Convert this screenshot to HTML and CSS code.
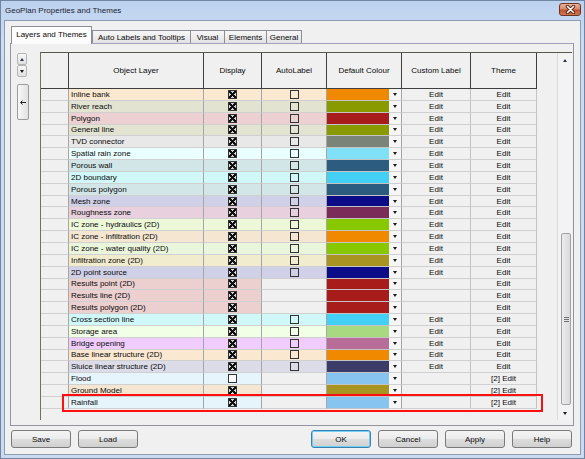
FILE: index.html
```html
<!DOCTYPE html>
<html lang="en">
<head>
    <meta charset="UTF-8">
    <title>GeoPlan Properties and Themes</title>
    <link rel="stylesheet" href="styles.css">
</head>
<body>
<div class="window">
    <div class="titlebar">
        <span class="title">GeoPlan Properties and Themes</span>
        <button class="close-btn">
            <svg width="13" height="9" viewBox="0 0 13 9">
                <path d="M3.5 1.5 L9.5 7.5 M9.5 1.5 L3.5 7.5" stroke="#5b2616" stroke-width="3.4" stroke-linecap="round"/>
                <path d="M3.5 1.5 L9.5 7.5 M9.5 1.5 L3.5 7.5" stroke="#ffffff" stroke-width="1.6" stroke-linecap="round"/>
            </svg>
        </button>
    </div>

    <div class="client">
        <div class="tabs">
            <div class="tab active t1">Layers and Themes</div>
            <div class="tab t2">Auto Labels and Tooltips</div>
            <div class="tab t3">Visual</div>
            <div class="tab t4">Elements</div>
            <div class="tab t5">General</div>
        </div>

        <div class="panel">
            <div class="tools">
                <div class="spin">
                    <button class="spin-btn"><i class="tri up"></i></button>
                    <button class="spin-btn"><i class="tri down"></i></button>
                </div>
                <button class="move-btn">
                    <svg width="6" height="5" viewBox="0 0 6 5">
                        <path d="M0.5 2.5 H6 M2.5 0.5 L0.5 2.5 L2.5 4.5" stroke="#222" stroke-width="1" fill="none"/>
                    </svg>
                </button>
            </div>

            <div class="grid">
                <div class="table">
                    <div class="head">
                        <div class="hc"></div>
                        <div class="hc">Object Layer</div>
                        <div class="hc">Display</div>
                        <div class="hc">AutoLabel</div>
                        <div class="hc">Default Colour</div>
                        <div class="hc">Custom Label</div>
                        <div class="hc">Theme</div>
                    </div>

                    <div class="row" style="--c:#fbe8d0"><div class="rh"></div><div class="name">Inline bank</div><div class="chk"><span class="cb on"></span></div><div class="chk"><span class="cb"></span></div><div class="sw" style="background:#f08800"></div><div class="dd"><i class="tri down"></i></div><div class="ed">Edit</div><div class="ed">Edit</div></div>
                    <div class="row" style="--c:#e2e3d0"><div class="rh"></div><div class="name">River reach</div><div class="chk"><span class="cb on"></span></div><div class="chk"><span class="cb"></span></div><div class="sw" style="background:#889a00"></div><div class="dd"><i class="tri down"></i></div><div class="ed">Edit</div><div class="ed">Edit</div></div>
                    <div class="row" style="--c:#ecd0d2"><div class="rh"></div><div class="name">Polygon</div><div class="chk"><span class="cb on"></span></div><div class="chk"><span class="cb"></span></div><div class="sw" style="background:#a81c1c"></div><div class="dd"><i class="tri down"></i></div><div class="ed">Edit</div><div class="ed">Edit</div></div>
                    <div class="row" style="--c:#e2e3d0"><div class="rh"></div><div class="name">General line</div><div class="chk"><span class="cb on"></span></div><div class="chk"><span class="cb"></span></div><div class="sw" style="background:#889a00"></div><div class="dd"><i class="tri down"></i></div><div class="ed">Edit</div><div class="ed">Edit</div></div>
                    <div class="row" style="--c:#e8e8e8"><div class="rh"></div><div class="name">TVD connector</div><div class="chk"><span class="cb on"></span></div><div class="chk"><span class="cb"></span></div><div class="sw" style="background:#7a8478"></div><div class="dd"><i class="tri down"></i></div><div class="ed">Edit</div><div class="ed">Edit</div></div>
                    <div class="row" style="--c:#eaffff"><div class="rh"></div><div class="name">Spatial rain zone</div><div class="chk"><span class="cb on"></span></div><div class="chk"><span class="cb"></span></div><div class="sw" style="background:#80e0f8"></div><div class="dd"><i class="tri down"></i></div><div class="ed">Edit</div><div class="ed">Edit</div></div>
                    <div class="row" style="--c:#d2e6e8"><div class="rh"></div><div class="name">Porous wall</div><div class="chk"><span class="cb on"></span></div><div class="chk"><span class="cb"></span></div><div class="sw" style="background:#2c5c80"></div><div class="dd"><i class="tri down"></i></div><div class="ed">Edit</div><div class="ed">Edit</div></div>
                    <div class="row" style="--c:#d0f8f8"><div class="rh"></div><div class="name">2D boundary</div><div class="chk"><span class="cb on"></span></div><div class="chk"><span class="cb"></span></div><div class="sw" style="background:#44d0f4"></div><div class="dd"><i class="tri down"></i></div><div class="ed">Edit</div><div class="ed">Edit</div></div>
                    <div class="row" style="--c:#d2e6e8"><div class="rh"></div><div class="name">Porous polygon</div><div class="chk"><span class="cb on"></span></div><div class="chk"><span class="cb"></span></div><div class="sw" style="background:#2c5c80"></div><div class="dd"><i class="tri down"></i></div><div class="ed">Edit</div><div class="ed">Edit</div></div>
                    <div class="row" style="--c:#d0d0e8"><div class="rh"></div><div class="name">Mesh zone</div><div class="chk"><span class="cb on"></span></div><div class="chk"><span class="cb"></span></div><div class="sw" style="background:#0c0c88"></div><div class="dd"><i class="tri down"></i></div><div class="ed">Edit</div><div class="ed">Edit</div></div>
                    <div class="row" style="--c:#e8d0de"><div class="rh"></div><div class="name">Roughness zone</div><div class="chk"><span class="cb on"></span></div><div class="chk"><span class="cb"></span></div><div class="sw" style="background:#7c2c58"></div><div class="dd"><i class="tri down"></i></div><div class="ed">Edit</div><div class="ed">Edit</div></div>
                    <div class="row" style="--c:#ecf8d8"><div class="rh"></div><div class="name">IC zone - hydraulics (2D)</div><div class="chk"><span class="cb on"></span></div><div class="chk"><span class="cb"></span></div><div class="sw" style="background:#88c800"></div><div class="dd"><i class="tri down"></i></div><div class="ed">Edit</div><div class="ed">Edit</div></div>
                    <div class="row" style="--c:#f4e6d0"><div class="rh"></div><div class="name">IC zone - infiltration (2D)</div><div class="chk"><span class="cb on"></span></div><div class="chk"><span class="cb"></span></div><div class="sw" style="background:#f08800"></div><div class="dd"><i class="tri down"></i></div><div class="ed">Edit</div><div class="ed">Edit</div></div>
                    <div class="row" style="--c:#eaf6dc"><div class="rh"></div><div class="name">IC zone - water quality (2D)</div><div class="chk"><span class="cb on"></span></div><div class="chk"><span class="cb"></span></div><div class="sw" style="background:#88c800"></div><div class="dd"><i class="tri down"></i></div><div class="ed">Edit</div><div class="ed">Edit</div></div>
                    <div class="row" style="--c:#f2ecce"><div class="rh"></div><div class="name">Infiltration zone (2D)</div><div class="chk"><span class="cb on"></span></div><div class="chk"><span class="cb"></span></div><div class="sw" style="background:#a89420"></div><div class="dd"><i class="tri down"></i></div><div class="ed">Edit</div><div class="ed">Edit</div></div>
                    <div class="row" style="--c:#d0d0e8"><div class="rh"></div><div class="name">2D point source</div><div class="chk"><span class="cb on"></span></div><div class="chk"><span class="cb"></span></div><div class="sw" style="background:#0c0c88"></div><div class="dd"><i class="tri down"></i></div><div class="ed">Edit</div><div class="ed">Edit</div></div>
                    <div class="row" style="--c:#ecd0d0"><div class="rh"></div><div class="name">Results point (2D)</div><div class="chk"><span class="cb on"></span></div><div class="chk off"></div><div class="sw" style="background:#a81c1c"></div><div class="dd"><i class="tri down"></i></div><div class="ed"></div><div class="ed">Edit</div></div>
                    <div class="row" style="--c:#ecd0d0"><div class="rh"></div><div class="name">Results line (2D)</div><div class="chk"><span class="cb on"></span></div><div class="chk off"></div><div class="sw" style="background:#a81c1c"></div><div class="dd"><i class="tri down"></i></div><div class="ed"></div><div class="ed">Edit</div></div>
                    <div class="row" style="--c:#ecd0d0"><div class="rh"></div><div class="name">Results polygon (2D)</div><div class="chk"><span class="cb on"></span></div><div class="chk off"></div><div class="sw" style="background:#a81c1c"></div><div class="dd"><i class="tri down"></i></div><div class="ed"></div><div class="ed">Edit</div></div>
                    <div class="row" style="--c:#d0f8f8"><div class="rh"></div><div class="name">Cross section line</div><div class="chk"><span class="cb on"></span></div><div class="chk"><span class="cb"></span></div><div class="sw" style="background:#44d0f4"></div><div class="dd"><i class="tri down"></i></div><div class="ed">Edit</div><div class="ed">Edit</div></div>
                    <div class="row" style="--c:#f0ffe6"><div class="rh"></div><div class="name">Storage area</div><div class="chk"><span class="cb on"></span></div><div class="chk"><span class="cb"></span></div><div class="sw" style="background:#a8d880"></div><div class="dd"><i class="tri down"></i></div><div class="ed">Edit</div><div class="ed">Edit</div></div>
                    <div class="row" style="--c:#f0ccff"><div class="rh"></div><div class="name">Bridge opening</div><div class="chk"><span class="cb on"></span></div><div class="chk"><span class="cb"></span></div><div class="sw" style="background:#b86c98"></div><div class="dd"><i class="tri down"></i></div><div class="ed">Edit</div><div class="ed">Edit</div></div>
                    <div class="row" style="--c:#fbe8d0"><div class="rh"></div><div class="name">Base linear structure (2D)</div><div class="chk"><span class="cb on"></span></div><div class="chk"><span class="cb"></span></div><div class="sw" style="background:#f08800"></div><div class="dd"><i class="tri down"></i></div><div class="ed">Edit</div><div class="ed">Edit</div></div>
                    <div class="row" style="--c:#dcdce8"><div class="rh"></div><div class="name">Sluice linear structure (2D)</div><div class="chk"><span class="cb on"></span></div><div class="chk"><span class="cb"></span></div><div class="sw" style="background:#3c3c68"></div><div class="dd"><i class="tri down"></i></div><div class="ed">Edit</div><div class="ed">Edit</div></div>
                    <div class="row" style="--c:#e6f4fc"><div class="rh"></div><div class="name">Flood</div><div class="chk"><span class="cb white"></span></div><div class="chk off"></div><div class="sw" style="background:#88c4f0"></div><div class="dd"><i class="tri down"></i></div><div class="ed"></div><div class="ed">[2] Edit</div></div>
                    <div class="row" style="--c:#f4e6d0"><div class="rh"></div><div class="name">Ground Model</div><div class="chk"><span class="cb on"></span></div><div class="chk off"></div><div class="sw" style="background:#a89420"></div><div class="dd"><i class="tri down"></i></div><div class="ed"></div><div class="ed">[2] Edit</div></div>
                    <div class="row" style="--c:#e6f4fc"><div class="rh"></div><div class="name">Rainfall</div><div class="chk"><span class="cb on"></span></div><div class="chk off"></div><div class="sw" style="background:#88c4f0"></div><div class="dd"><i class="tri down"></i></div><div class="ed"></div><div class="ed">[2] Edit</div></div>
                </div>

                <div class="scrollbar">
                    <div class="sb-btn"><i class="tri up"></i></div>
                    <div class="sb-track">
                        <div class="sb-thumb"><span class="grip"></span></div>
                    </div>
                    <div class="sb-btn"><i class="tri down"></i></div>
                </div>

                <div class="highlight"></div>
            </div>
        </div>

        <div class="buttons">
            <div class="btn-group">
                <button class="btn">Save</button>
                <button class="btn">Load</button>
            </div>
            <div class="btn-group">
                <button class="btn default">OK</button>
                <button class="btn">Cancel</button>
                <button class="btn">Apply</button>
                <button class="btn">Help</button>
            </div>
        </div>
    </div>
</div>
</body>
</html>
```

FILE: styles.css
```css
body {
    margin: 0;
    font-family: "Liberation Sans", Arial, sans-serif;
    font-size: 8px;
    color: #0a0a0a;
    background: #c9dbf1;
}

button {
    font-family: inherit;
    font-size: 8px;
    color: #0a0a0a;
    padding: 0;
    margin: 0;
}

.window {
    width: 585px;
    height: 459px;
    box-sizing: border-box;
    border: 1px solid #6f85a3;
    padding: 0 3px 3px;
    display: flex;
    flex-direction: column;
    background: linear-gradient(#bcd2ee, #cddcf1 40px, #cbdaef);
}

/* title bar */
.titlebar {
    height: 19px;
    display: flex;
    align-items: center;
    justify-content: space-between;
    padding-left: 1px;
}

.title {
    font-size: 8px;
    color: #1c2330;
}

.close-btn {
    width: 22px;
    height: 13px;
    margin-top: -2px;
    border: 1px solid #6b3424;
    border-radius: 3px;
    background: linear-gradient(#e9b49a, #d78a67 45%, #c0502f 55%, #d27a52);
    display: flex;
    align-items: center;
    justify-content: center;
}

/* client area */
.client {
    flex: 1;
    border: 1px solid #8a9cb6;
    background: #f0f0f0;
    padding: 5px 6px 0 5px;
    display: flex;
    flex-direction: column;
}

.tabs {
    height: 17px;
    display: flex;
    align-items: flex-end;
    margin-left: 1px;
}

.tab {
    height: 13px;
    box-sizing: border-box;
    border: 1px solid #8c8e96;
    border-bottom: none;
    border-right: none;
    background: linear-gradient(#f6f6f6, #e3e3e3);
    display: flex;
    align-items: center;
    justify-content: center;
}

.tab.active {
    height: 18px;
    margin-bottom: -1px;
    position: relative;
    z-index: 1;
    background: #fcfcfc;
    border-right: 1px solid #8c8e96;
    padding-bottom: 2px;
}

.t1 { width: 81px; }
.t2 { width: 98px; }
.t3 { width: 34px; }
.t4 { width: 42px; }
.t5 { width: 36px; border-right: 1px solid #8c8e96; }

.panel {
    height: 383px;
    box-sizing: border-box;
    border: 1px solid #9294a0;
    border-top-color: #a79fbc;
    padding: 8px 1px 0 6px;
    display: flex;
}

/* left buttons */
.tools {
    width: 13px;
    margin-right: 10px;
    padding-top: 1px;
    display: flex;
    flex-direction: column;
}

.spin {
    width: 10px;
    display: flex;
    flex-direction: column;
}

.spin-btn {
    height: 12px;
    box-sizing: border-box;
    border: 1px solid #b4b4b4;
    border-radius: 2px;
    background: linear-gradient(#f8f8f8, #e0e0e0);
    display: flex;
    align-items: center;
    justify-content: center;
}

.move-btn {
    width: 12px;
    height: 36px;
    margin-top: 7px;
    box-sizing: border-box;
    border: 1px solid #9c9c9c;
    border-radius: 2px;
    background: linear-gradient(90deg, #f8f8f8, #e2e2e2);
    display: flex;
    align-items: center;
    justify-content: center;
}

.tri {
    display: block;
    width: 0;
    height: 0;
    border-left: 2.5px solid transparent;
    border-right: 2.5px solid transparent;
}

.tri.up { border-bottom: 3px solid #2a3450; }
.tri.down { border-top: 3px solid #1a1a1a; }

/* data grid */
.grid {
    position: relative;
    width: 532px;
    height: 368px;
    box-sizing: border-box;
    border-left: 1px solid #6e735f;
    border-top: 1px solid #55594b;
    background: #f0f0f0;
    display: flex;
}

.table {
    width: 516px;
}

.head {
    display: grid;
    grid-template-columns: 28px 135px 58px 65px 75px 69px 66px;
    height: 36px;
}

.hc {
    box-sizing: border-box;
    border-right: 1px solid #3e3e3e;
    border-bottom: 1px solid #3e3e3e;
    display: flex;
    align-items: center;
    justify-content: center;
    background: #f0f0f0;
}

.row {
    display: grid;
    grid-template-columns: 28px 135px 58px 65px 62px 13px 69px 66px;
    height: 11.85px;
}

.row > div {
    box-sizing: border-box;
    border-right: 1px solid #a6a6a6;
    border-bottom: 1px solid #d0d0d0;
    display: flex;
    align-items: center;
    white-space: nowrap;
    overflow: hidden;
}

.row .rh {
    background: #f0f0f0;
}

.row .name {
    background: var(--c);
    padding-left: 2px;
}

.row .chk {
    background: var(--c);
    justify-content: center;
}

.row .chk.off {
    background: #f0f0f0;
}

.row .sw {
    border-right: none;
    border-bottom-color: #c4c4c4;
}

.row .dd {
    background: #f6f6f6;
    justify-content: center;
}

.row .ed {
    background: #f0f0f0;
    justify-content: center;
    border-right-color: #c2c2c2;
    color: #0a0a0a;
}

.cb {
    width: 9px;
    height: 9px;
    box-sizing: border-box;
    border: 1px solid #333;
}

.cb.white {
    background: #fdfdfd;
}

.cb.on {
    background:
        linear-gradient(45deg, transparent 38%, #111 38%, #111 62%, transparent 62%),
        linear-gradient(-45deg, transparent 38%, #111 38%, #111 62%, transparent 62%),
        #d6d6d6;
}

/* scrollbar */
.scrollbar {
    width: 15px;
    margin-left: auto;
    box-sizing: border-box;
    border-left: 1px solid #dadada;
    background: #f3f3f3;
    display: flex;
    flex-direction: column;
}

.sb-btn {
    height: 14px;
    display: flex;
    align-items: center;
    justify-content: center;
}

.sb-track {
    flex: 1;
    padding-top: 166px;
    padding-left: 3px;
}

.sb-thumb {
    width: 10px;
    height: 172px;
    box-sizing: border-box;
    border: 1px solid #a2a2a2;
    border-radius: 2px;
    background: linear-gradient(90deg, #ececec, #dadada);
    display: flex;
    align-items: center;
    justify-content: center;
}

.grip {
    width: 5px;
    height: 5px;
    background: repeating-linear-gradient(#707070 0 1px, transparent 1px 2px);
}

.highlight {
    position: absolute;
    left: 21px;
    top: 341px;
    width: 481px;
    height: 18px;
    box-sizing: border-box;
    border: 2px solid #ff1010;
}

/* bottom buttons */
.buttons {
    margin: 4px 2px 0 1px;
    display: flex;
    justify-content: space-between;
}

.btn-group {
    display: flex;
    gap: 7px;
}

.btn {
    width: 60px;
    height: 18px;
    box-sizing: border-box;
    border: 1px solid #7a7a7a;
    border-radius: 3px;
    background: linear-gradient(#f4f4f4, #ebebeb 50%, #dddddd 51%, #d0d0d0);
}

.btn.default {
    border-color: #3c7fb1;
    box-shadow: inset 0 0 0 1px #6fcff5;
}
```
